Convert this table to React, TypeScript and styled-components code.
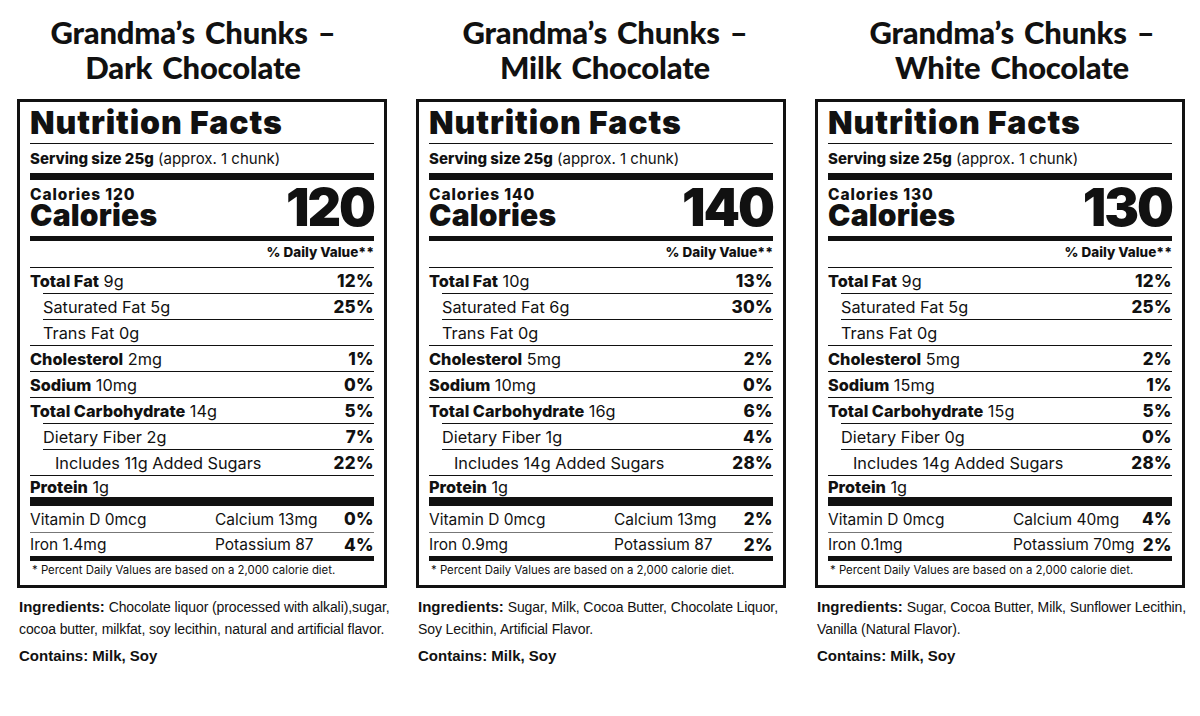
import React from "react";
import styled, { createGlobalStyle } from "styled-components";

const GlobalStyle = createGlobalStyle`
  html, body { margin: 0; padding: 0; background: #ffffff; }
  * { box-sizing: border-box; }
`;

type Row = { name: string; amount?: string; dv?: string; bold?: boolean; level?: 0 | 1 | 2 };
type Product = {
  title2: string;
  shift: number;
  calories: string;
  rows: Row[];
  vitD: string;
  calcium: string;
  calciumDv: string;
  iron: string;
  potassium: string;
  potassiumDv: string;
  ingredients: [string, string];
};

const products: Product[] = [
  {
    title2: "Dark Chocolate",
    shift: -9,
    calories: "120",
    rows: [
      { name: "Total Fat", amount: "9g", dv: "12%", bold: true },
      { name: "Saturated Fat", amount: "5g", dv: "25%", level: 1 },
      { name: "Trans Fat", amount: "0g", level: 1 },
      { name: "Cholesterol", amount: "2mg", dv: "1%", bold: true },
      { name: "Sodium", amount: "10mg", dv: "0%", bold: true },
      { name: "Total Carbohydrate", amount: "14g", dv: "5%", bold: true },
      { name: "Dietary Fiber", amount: "2g", dv: "7%", level: 1 },
      { name: "Includes 11g Added Sugars", dv: "22%", level: 2 },
    ],
    vitD: "0mcg",
    calcium: "13mg",
    calciumDv: "0%",
    iron: "1.4mg",
    potassium: "87",
    potassiumDv: "4%",
    ingredients: [
      "Chocolate liquor (processed with alkali),sugar,",
      "cocoa butter, milkfat, soy lecithin, natural and artificial flavor.",
    ],
  },
  {
    title2: "Milk Chocolate",
    shift: 4,
    calories: "140",
    rows: [
      { name: "Total Fat", amount: "10g", dv: "13%", bold: true },
      { name: "Saturated Fat", amount: "6g", dv: "30%", level: 1 },
      { name: "Trans Fat", amount: "0g", level: 1 },
      { name: "Cholesterol", amount: "5mg", dv: "2%", bold: true },
      { name: "Sodium", amount: "10mg", dv: "0%", bold: true },
      { name: "Total Carbohydrate", amount: "16g", dv: "6%", bold: true },
      { name: "Dietary Fiber", amount: "1g", dv: "4%", level: 1 },
      { name: "Includes 14g Added Sugars", dv: "28%", level: 2 },
    ],
    vitD: "0mcg",
    calcium: "13mg",
    calciumDv: "2%",
    iron: "0.9mg",
    potassium: "87",
    potassiumDv: "2%",
    ingredients: ["Sugar, Milk, Cocoa Butter, Chocolate Liquor,", "Soy Lecithin, Artificial Flavor."],
  },
  {
    title2: "White Chocolate",
    shift: 12,
    calories: "130",
    rows: [
      { name: "Total Fat", amount: "9g", dv: "12%", bold: true },
      { name: "Saturated Fat", amount: "5g", dv: "25%", level: 1 },
      { name: "Trans Fat", amount: "0g", level: 1 },
      { name: "Cholesterol", amount: "5mg", dv: "2%", bold: true },
      { name: "Sodium", amount: "15mg", dv: "1%", bold: true },
      { name: "Total Carbohydrate", amount: "15g", dv: "5%", bold: true },
      { name: "Dietary Fiber", amount: "0g", dv: "0%", level: 1 },
      { name: "Includes 14g Added Sugars", dv: "28%", level: 2 },
    ],
    vitD: "0mcg",
    calcium: "40mg",
    calciumDv: "4%",
    iron: "0.1mg",
    potassium: "70mg",
    potassiumDv: "2%",
    ingredients: ["Sugar, Cocoa Butter, Milk, Sunflower Lecithin,", "Vanilla (Natural Flavor)."],
  },
];

const INK = "#111111";

const Page = styled.main`
  width: 1200px;
  height: 716px;
  padding-left: 17px;
  display: flex;
  gap: 29px;
  background: #ffffff;
  color: ${INK};
  overflow: hidden;
`;

const Column = styled.div`
  width: 370px;
  display: flex;
  flex-direction: column;
`;

const Heading = styled.h1<{ $shift: number }>`
  margin: 0;
  height: 99px;
  padding-top: 15px;
  font-family: Lato, "Open Sans", sans-serif;
  font-weight: 900;
  font-size: 31px;
  line-height: 35px;
  text-align: center;
  letter-spacing: -0.2px;
  word-spacing: 3px;
  white-space: nowrap;
  ${(p) => (p.$shift > 0 ? `padding-left: ${p.$shift * 2}px;` : `padding-right: ${-p.$shift * 2}px;`)}
`;

const Label = styled.section`
  border: 3px solid ${INK};
  padding: 0 10px;
  display: flex;
  flex-direction: column;
  font-family: Inter, "Liberation Sans", sans-serif;
`;

const LabelTitle = styled.h2`
  margin: 0;
  height: 42px;
  padding-top: 5px;
  border-bottom: 1px solid ${INK};
  font-weight: 900;
  font-size: 32px;
  line-height: 32px;
  letter-spacing: 0.9px;
  white-space: nowrap;
`;

const Serving = styled.div`
  height: 29px;
  padding-top: 1px;
  font-size: 15px;
  line-height: 27px;
  white-space: nowrap;
  b { font-weight: 800; }
`;

const Bar = styled.div<{ $h: number }>`
  height: ${(p) => p.$h}px;
  background: ${INK};
`;

const CalorieBlock = styled.div`
  height: 56px;
  display: flex;
  justify-content: space-between;
  align-items: flex-end;
`;

const CalorieText = styled.div`
  display: flex;
  flex-direction: column;
  padding-bottom: 10px;
`;

const CalorieSmall = styled.span`
  font-size: 15.5px;
  font-weight: 800;
  line-height: 14px;
  letter-spacing: 0.9px;
  margin-bottom: 2px;
`;

const CalorieBig = styled.span`
  font-size: 30px;
  font-weight: 900;
  line-height: 22px;
  letter-spacing: 0.2px;
`;

const CalorieNumber = styled.span`
  font-size: 52px;
  font-weight: 900;
  line-height: 52px;
  letter-spacing: -2px;
  padding-bottom: 2px;
`;

const DailyHeader = styled.div`
  height: 26px;
  font-size: 13.5px;
  font-weight: 800;
  line-height: 22px;
  text-align: right;
`;

const NutrientRow = styled.div<{ $level: number; $h?: number }>`
  height: ${(p) => p.$h ?? 26}px;
  margin-left: ${(p) => (p.$level > 0 ? 13 : 0)}px;
  padding-left: ${(p) => (p.$level === 2 ? 12 : 0)}px;
  border-top: 1px solid ${INK};
  display: flex;
  justify-content: space-between;
  align-items: center;
  font-size: 16.3px;
  white-space: nowrap;
`;

const Name = styled.span<{ $bold: boolean }>`
  font-weight: ${(p) => (p.$bold ? 800 : 400)};
`;

const Amount = styled.span`
  font-weight: 400;
`;

const Percent = styled.span`
  font-weight: 800;
  font-size: 17px;
  letter-spacing: 0.4px;
`;

const MineralRow = styled.div<{ $h: number; $line?: boolean }>`
  height: ${(p) => p.$h}px;
  display: grid;
  grid-template-columns: 185px 1fr auto;
  align-items: center;
  font-size: 15.5px;
  white-space: nowrap;
  border-top: ${(p) => (p.$line ? `1px solid #777` : "none")};
`;

const Footnote = styled.div`
  height: 24px;
  padding-top: 3px;
  padding-left: 2px;
  font-size: 11.4px;
  line-height: 12px;
  white-space: nowrap;
`;

const Ingredients = styled.p`
  margin: 8px 0 0 2px;
  font-family: "Liberation Sans", Arial, sans-serif;
  font-size: 14px;
  line-height: 22px;
  letter-spacing: -0.1px;
  white-space: nowrap;
  b { font-weight: 700; font-size: 15px; letter-spacing: 0; }
`;

const Contains = styled.p`
  margin: 5px 0 0 2px;
  font-family: "Liberation Sans", Arial, sans-serif;
  font-size: 15px;
  line-height: 22px;
  font-weight: 700;
`;

function NutritionLabel({ p }: { p: Product }) {
  return (
    <Label>
      <LabelTitle>Nutrition Facts</LabelTitle>
      <Serving>
        <b>Serving size 25g</b> (approx. 1 chunk)
      </Serving>
      <Bar $h={7} />
      <CalorieBlock>
        <CalorieText>
          <CalorieSmall>Calories {p.calories}</CalorieSmall>
          <CalorieBig>Calories</CalorieBig>
        </CalorieText>
        <CalorieNumber>{p.calories}</CalorieNumber>
      </CalorieBlock>
      <Bar $h={5} />
      <DailyHeader>% Daily Value**</DailyHeader>
      {p.rows.map((r) => (
        <NutrientRow key={r.name} $level={r.level ?? 0}>
          <span>
            <Name $bold={!!r.bold}>{r.name}</Name>
            {r.amount ? <Amount> {r.amount}</Amount> : null}
          </span>
          {r.dv ? <Percent>{r.dv}</Percent> : <span />}
        </NutrientRow>
      ))}
      <NutrientRow $level={0} $h={22}>
        <span>
          <Name $bold>Protein</Name>
          <Amount> 1g</Amount>
        </span>
      </NutrientRow>
      <Bar $h={9} />
      <MineralRow $h={26}>
        <span>Vitamin D {p.vitD}</span>
        <span>Calcium {p.calcium}</span>
        <Percent>{p.calciumDv}</Percent>
      </MineralRow>
      <MineralRow $h={24} $line>
        <span>Iron {p.iron}</span>
        <span>Potassium {p.potassium}</span>
        <Percent>{p.potassiumDv}</Percent>
      </MineralRow>
      <Bar $h={5} />
      <Footnote>* Percent Daily Values are based on a 2,000 calorie diet.</Footnote>
    </Label>
  );
}

export default function App() {
  return (
    <>
      <GlobalStyle />
      <Page>
        {products.map((p) => (
          <Column key={p.title2}>
            <Heading $shift={p.shift}>
              Grandma’s Chunks –
              <br />
              {p.title2}
            </Heading>
            <NutritionLabel p={p} />
            <Ingredients>
              <b>Ingredients:</b> {p.ingredients[0]}
              <br />
              {p.ingredients[1]}
            </Ingredients>
            <Contains>Contains: Milk, Soy</Contains>
          </Column>
        ))}
      </Page>
    </>
  );
}
